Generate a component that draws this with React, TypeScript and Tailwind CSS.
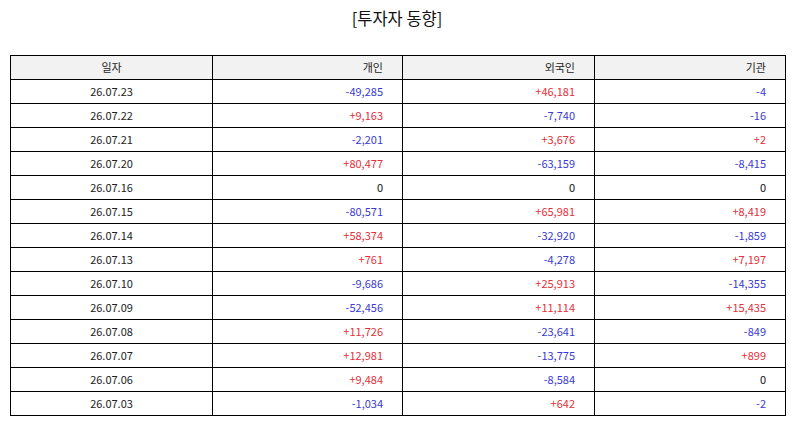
const rows: [string, string, string, string][] = [
  ["26.07.23", "-49,285", "+46,181", "-4"],
  ["26.07.22", "+9,163", "-7,740", "-16"],
  ["26.07.21", "-2,201", "+3,676", "+2"],
  ["26.07.20", "+80,477", "-63,159", "-8,415"],
  ["26.07.16", "0", "0", "0"],
  ["26.07.15", "-80,571", "+65,981", "+8,419"],
  ["26.07.14", "+58,374", "-32,920", "-1,859"],
  ["26.07.13", "+761", "-4,278", "+7,197"],
  ["26.07.10", "-9,686", "+25,913", "-14,355"],
  ["26.07.09", "-52,456", "+11,114", "+15,435"],
  ["26.07.08", "+11,726", "-23,641", "-849"],
  ["26.07.07", "+12,981", "-13,775", "+899"],
  ["26.07.06", "+9,484", "-8,584", "0"],
  ["26.07.03", "-1,034", "+642", "-2"],
];

function color(v: string) {
  if (v.startsWith("+")) return "text-[#e3303a]";
  if (v.startsWith("-")) return "text-[#3a3ad0]";
  return "text-[#111111]";
}

export default function App() {
  return (
    <div
      className="w-[794px] h-[425px] bg-white"
      style={{ fontFamily: '"Noto Sans CJK KR", "Noto Sans", sans-serif' }}
    >
      <div className="pt-[5px] h-[55px] text-center text-[16.5px] leading-[26px] text-[#111]">
        [투자자 동향]
      </div>
      <table className="ml-[10px] w-[775px] table-fixed border-collapse text-[11px] text-[#222]">
        <colgroup>
          <col className="w-[202px]" />
          <col className="w-[190px]" />
          <col className="w-[192px]" />
          <col className="w-[191px]" />
        </colgroup>
        <thead>
          <tr className="bg-[#f2f2f2]">
            <th className="h-[24px] p-0 border border-black font-normal text-center">일자</th>
            <th className="h-[24px] p-0 pr-[19px] border border-black font-normal text-right">개인</th>
            <th className="h-[24px] p-0 pr-[19px] border border-black font-normal text-right">외국인</th>
            <th className="h-[24px] p-0 pr-[19px] border border-black font-normal text-right">기관</th>
          </tr>
        </thead>
        <tbody>
          {rows.map((r) => (
            <tr key={r[0]}>
              <td className="h-[24px] p-0 border border-black text-center">{r[0]}</td>
              <td className={"h-[24px] p-0 pr-[19px] border border-black text-right " + color(r[1])}>{r[1]}</td>
              <td className={"h-[24px] p-0 pr-[19px] border border-black text-right " + color(r[2])}>{r[2]}</td>
              <td className={"h-[24px] p-0 pr-[19px] border border-black text-right " + color(r[3])}>{r[3]}</td>
            </tr>
          ))}
        </tbody>
      </table>
    </div>
  );
}
